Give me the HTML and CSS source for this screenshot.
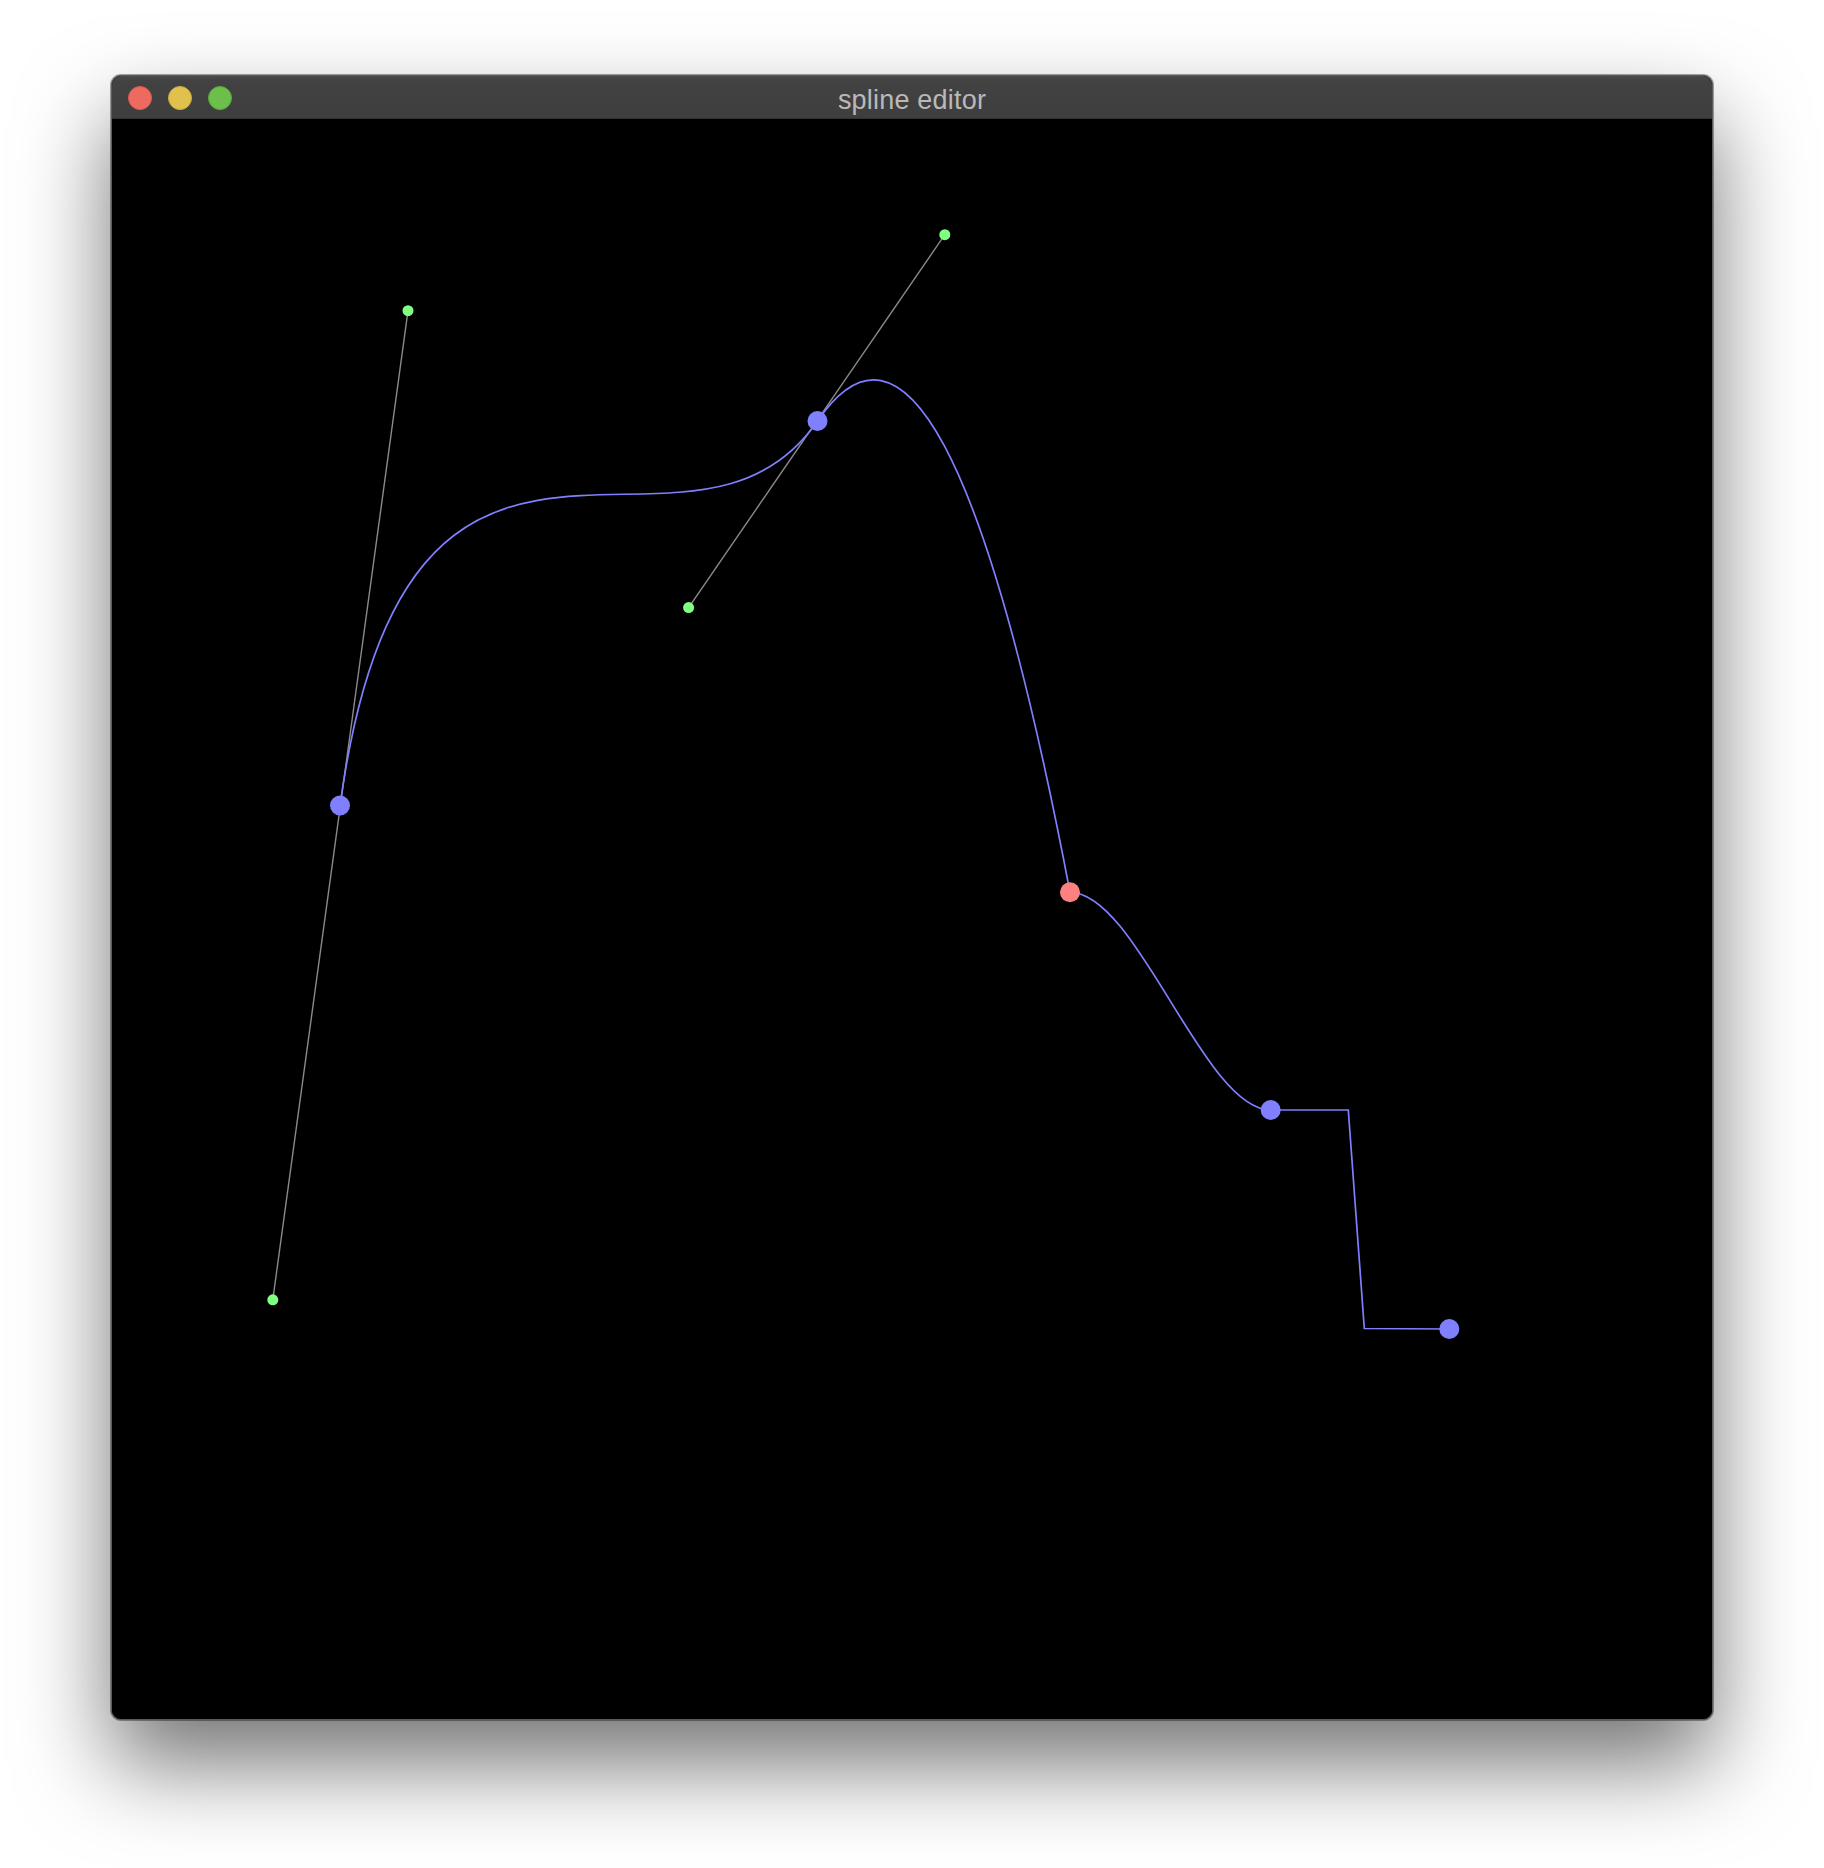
FILE: index.html
```html
<!DOCTYPE html>
<html>
<head>
<meta charset="utf-8">
<title>spline editor</title>
<link rel="stylesheet" href="styles.css">
</head>
<body>
<div class="window">
  <div class="titlebar">
    <div class="lights">
      <span class="light close"></span>
      <span class="light min"></span>
      <span class="light max"></span>
    </div>
    <div class="title">spline editor</div>
    <div class="spacer"></div>
  </div>
  <div class="canvas">
    <svg class="scene" width="1600" height="1600" viewBox="0 0 1600 1600" xmlns="http://www.w3.org/2000/svg">
      <g class="handles">
        <line x1="160.8" y1="1180.8" x2="296" y2="191.7"/>
        <line x1="576.6" y1="488.6" x2="832.8" y2="115.7"/>
      </g>
      <path class="curve" d="M228 686.5 C296 191.7 576.6 488.6 705.5 302 Q832.8 115.7 958 773.3 C1024.9 773.3 1091.8 991 1158.7 991 L1236.3 991 L1252.3 1209.5 L1337.3 1210"/>
      <g class="ctrl">
        <circle cx="296" cy="191.7" r="5.5"/>
        <circle cx="832.8" cy="115.7" r="5.5"/>
        <circle cx="576.6" cy="488.6" r="5.5"/>
        <circle cx="160.8" cy="1180.8" r="5.5"/>
      </g>
      <g class="knots">
        <circle cx="228" cy="686.5" r="10"/>
        <circle cx="705.5" cy="302" r="10"/>
        <circle cx="1158.7" cy="991" r="10"/>
        <circle cx="1337.3" cy="1210" r="10"/>
      </g>
      <circle class="selected" cx="958" cy="773.3" r="10"/>
    </svg>
  </div>
</div>
</body>
</html>
```
FILE: styles.css
```css
html, body {
  margin: 0;
  padding: 0;
  background: #ffffff;
}

body {
  width: 1824px;
  height: 1868px;
  overflow: hidden;
  padding-top: 75px;
  box-sizing: border-box;
}

.window {
  margin-left: 111px;
  width: 1600px;
  border: 1px solid #5c5c5c;
  border-radius: 10px;
  overflow: hidden;
  background: #000;
  box-shadow: 0 44px 90px rgba(0, 0, 0, 0.55), 0 0 0 1px rgba(0, 0, 0, 0.35);
}

.titlebar {
  height: 43px;
  display: grid;
  grid-template-columns: 1fr auto 1fr;
  align-items: center;
  background: linear-gradient(#4a4a4a, #424242 12%, #3e3e3e);
  border-bottom: 1px solid #313131;
  box-sizing: border-box;
}

.lights {
  display: flex;
  gap: 16px;
  padding-left: 16px;
  align-items: center;
}

.light {
  width: 24px;
  height: 24px;
  border-radius: 50%;
  box-sizing: border-box;
  display: block;
}

.close { background: #ee6a5f; border: 1px solid #d85a50; }
.min { background: #e1c14d; border: 1px solid #cdad3e; }
.max { background: #6bbf4a; border: 1px solid #5aa83d; }

.title {
  font-family: "Liberation Sans", "Helvetica", Arial, sans-serif;
  font-size: 27px;
  color: #b9b9b9;
  line-height: 38px;
  padding-top: 5px;
  letter-spacing: 0.2px;
}

.canvas {
  width: 1600px;
  height: 1600px;
  background: #000;
}

.scene {
  display: block;
}

.handles line {
  stroke: #8a8a8a;
  stroke-width: 1.4;
}

.curve {
  fill: none;
  stroke: #7f7fff;
  stroke-width: 1.7;
}

.ctrl circle { fill: #80ff80; }
.knots circle { fill: #8080ff; }
.selected { fill: #ff8080; }
```
